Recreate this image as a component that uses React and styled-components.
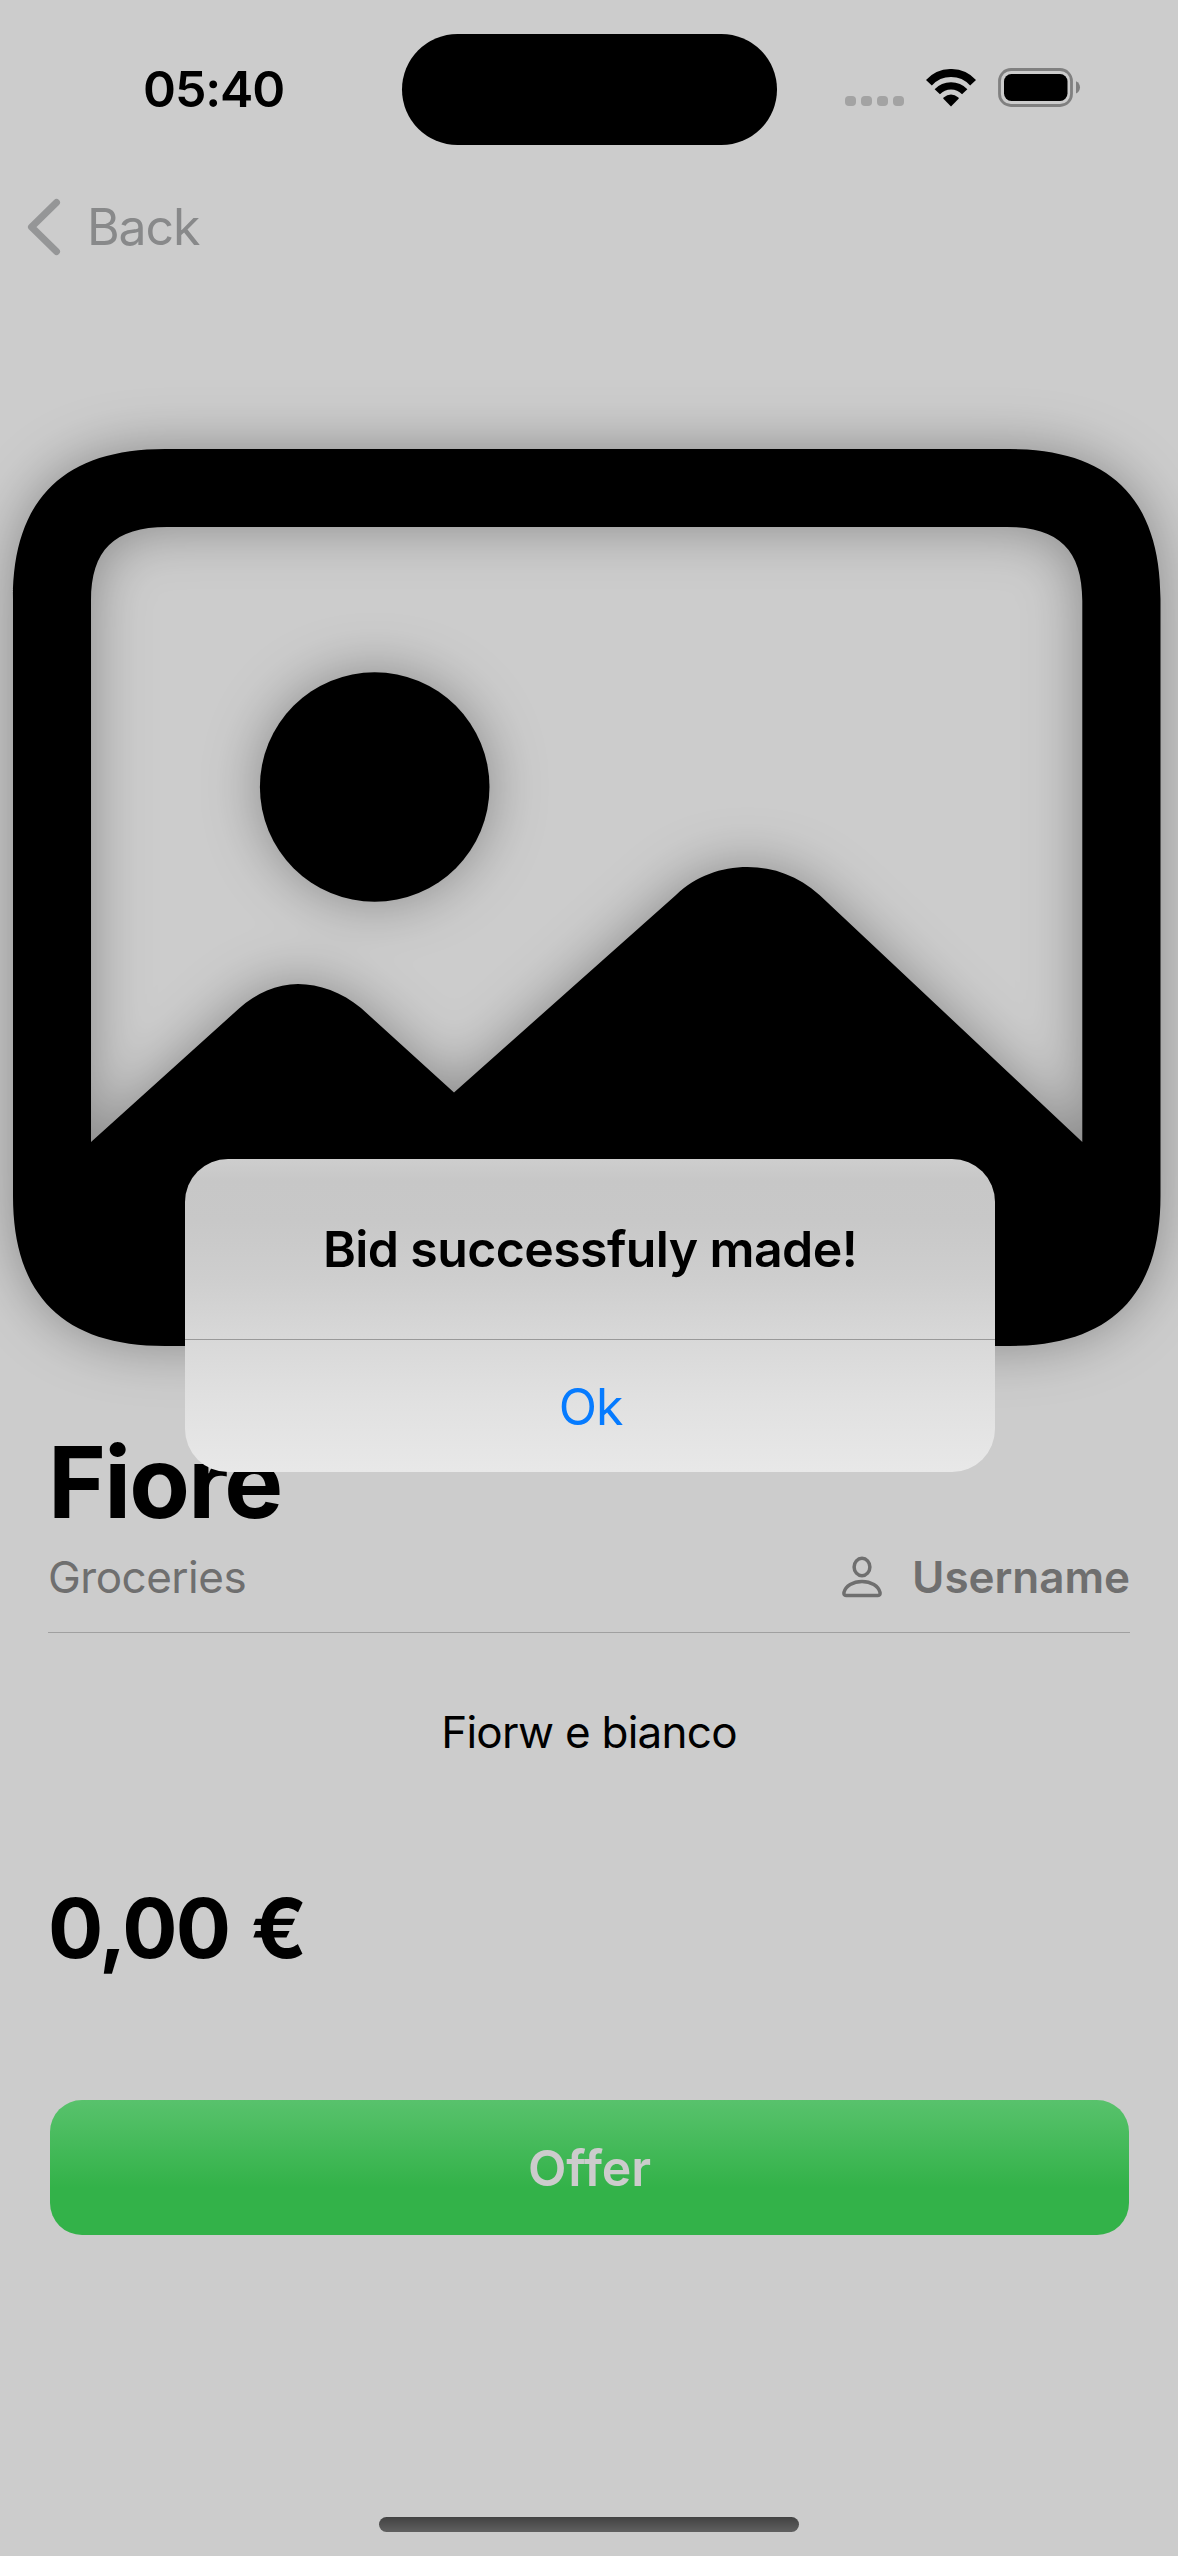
import React from "react";
import styled, { createGlobalStyle } from "styled-components";

const GlobalStyle = createGlobalStyle`
  html, body {
    margin: 0;
    background: #cccccc;
  }
  * { box-sizing: border-box; }
`;

const Screen = styled.main`
  position: relative;
  display: flex;
  flex-direction: column;
  width: 1178px;
  height: 2556px;
  overflow: hidden;
  background: #cccccc;
  color: #000;
  font-family: Inter, "Liberation Sans", sans-serif;
`;

const StatusBar = styled.header`
  display: grid;
  grid-template-columns: 402px 375px 401px;
  align-items: center;
  height: 178px;
  flex: none;
`;

const Clock = styled.time`
  padding-left: 143px;
  font-size: 50px;
  font-weight: 600;
  line-height: 60px;
  letter-spacing: ${(p) => p.$tracking}px;
  white-space: nowrap;
`;

const Island = styled.div`
  height: 111px;
  border-radius: 56px;
  background: #000;
`;

const Indicators = styled.div`
  display: flex;
  align-items: center;
  padding: 0 0 3px 68px;
`;

const Cellular = styled.div`
  display: flex;
  gap: 5.5px;
  margin: 27px 22px 0 0;
`;

const Dot = styled.i`
  width: 10.5px;
  height: 10px;
  border-radius: 4px;
  background: #a3a3a3;
`;

const WifiIcon = styled.svg`
  width: 50px;
  height: 38px;
  margin-right: 22.5px;
`;

const BatteryIcon = styled.svg`
  width: 83px;
  height: 39px;
`;

const NavBar = styled.nav`
  display: flex;
  align-items: center;
  height: 98px;
  flex: none;
  padding-left: 27px;
`;

const BackButton = styled.button`
  display: flex;
  align-items: center;
  gap: 26px;
  padding: 0;
  border: 0;
  background: none;
  color: #88898a;
  font: 400 50px/60px Inter, "Liberation Sans", sans-serif;
  letter-spacing: ${(p) => p.$tracking}px;
`;

const Chevron = styled.svg`
  width: 34px;
  height: 58px;
`;

const Picture = styled.svg`
  flex: none;
  width: 1148px;
  height: 897px;
  margin: 173px 0 0 12.8px;
  overflow: visible;
`;

const Details = styled.section`
  display: flex;
  flex-direction: column;
  padding: 86px 48px 0;
`;

const Title = styled.h1`
  margin: 0;
  font-size: 99px;
  font-weight: 700;
  line-height: 100px;
  letter-spacing: ${(p) => p.$tracking}px;
`;

const MetaRow = styled.div`
  display: flex;
  justify-content: space-between;
  align-items: center;
  height: 60px;
  margin-top: 15px;
  color: #6f6f6f;
  font-size: 44px;
  line-height: 60px;
`;

const Category = styled.span`
  letter-spacing: ${(p) => p.$tracking}px;
`;

const Seller = styled.div`
  display: flex;
  align-items: center;
  gap: 30px;
`;

const PersonIcon = styled.svg`
  width: 40px;
  height: 42px;
`;

const SellerName = styled.span`
  font-weight: 600;
  letter-spacing: ${(p) => p.$tracking}px;
`;

const Divider = styled.hr`
  width: 100%;
  height: 1px;
  margin: 25px 0 0;
  border: 0;
  background: #a0a0a0;
`;

const Description = styled.p`
  margin: 69px 0 0;
  font-size: 44px;
  line-height: 60px;
  letter-spacing: ${(p) => p.$tracking}px;
  text-align: center;
`;

const Price = styled.strong`
  margin-top: 117px;
  font-size: 82px;
  font-weight: 700;
  line-height: 100px;
  letter-spacing: ${(p) => p.$tracking}px;
  word-spacing: 4px;
`;

const OfferButton = styled.button`
  height: 135px;
  margin: 121px 1px 0 2px;
  padding: 0;
  border: 0;
  border-radius: 32px;
  background: linear-gradient(#58c26c 0%, #33b249 65%, #33b249 100%);
  color: #cccccc;
  font: 600 50px/60px Inter, "Liberation Sans", sans-serif;
  letter-spacing: ${(p) => p.$tracking}px;
`;

const HomeBar = styled.div`
  width: 420px;
  height: 15px;
  margin: auto auto 24px;
  border-radius: 8px;
  background: linear-gradient(#424242, #606060);
`;

const Alert = styled.div`
  position: absolute;
  top: 1159px;
  left: 185px;
  display: flex;
  flex-direction: column;
  width: 810px;
  height: 313px;
  border-radius: 43px;
  overflow: hidden;
  background: linear-gradient(#cecece 0%, #c7c7c7 7%, #c8c8c8 20%, #cecece 38%, #d8d8d8 57%, #e1e1e1 78%, #e8e8e8 100%);
`;

const AlertTitle = styled.h2`
  margin: 0;
  height: 181px;
  border-bottom: 1px solid #999;
  font-size: 50px;
  font-weight: 600;
  line-height: 180px;
  letter-spacing: ${(p) => p.$tracking}px;
  text-align: center;
`;

const AlertAction = styled.button`
  flex: 1;
  padding: 2px 0 0 1px;
  border: 0;
  background: none;
  color: #067bff;
  font: 400 50px/60px Inter, "Liberation Sans", sans-serif;
  letter-spacing: ${(p) => p.$tracking}px;
`;

function StatusIndicators() {
  return (
    <Indicators>
      <Cellular>
        <Dot />
        <Dot />
        <Dot />
        <Dot />
      </Cellular>
      <WifiIcon viewBox="0 0 50 38">
        <path d="M2.9 13.7A30 30 0 0 1 47.1 13.7" fill="none" stroke="#000" strokeWidth="8" />
        <path d="M11.3 22.7A19 19 0 0 1 38.7 22.7" fill="none" stroke="#000" strokeWidth="7.4" />
        <path d="M25 37.4L17.4 29.8Q17 29.2 17.6 28.6Q25 22.2 32.4 28.6Q33 29.2 32.6 29.8Z" />
      </WifiIcon>
      <BatteryIcon viewBox="0 0 83 39">
        <rect x="1.5" y="1.5" width="72" height="36" rx="11.5" fill="none" stroke="#808080" strokeWidth="2.8" />
        <rect x="6" y="6" width="63.5" height="27" rx="7.5" />
        <path d="M78 13.2C83.3 15 83.3 23.6 78 25.4Z" fill="#808080" />
      </BatteryIcon>
    </Indicators>
  );
}

function PlaceholderPicture() {
  return (
    <Picture viewBox="0 0 1148 897">
      <defs>
        <filter id="soft" filterUnits="userSpaceOnUse" x="-150" y="-150" width="1450" height="1200">
          <feDropShadow dx="0" dy="0" stdDeviation="28" floodColor="#000" floodOpacity="0.33" />
        </filter>
      </defs>
      <g filter="url(#soft)">
        <path
          fillRule="evenodd"
          d="M152 0H996C1097 0 1147.5 50 1147.5 150V747C1147.5 847 1097 897 996 897H152C51 897 0 847 0 747V150C0 50 51 0 152 0Z
             M78 693L226 559.5C243 544 264 535 285 535C306 535 329 543 348 559L441 643.5L663 446C683 427 708 418 734.5 418C761 418 785 427 806.5 446L1069.3 693V152C1069.3 101 1046 78 994 78H154C101 78 78 101 78 152Z"
        />
        <circle cx="361.7" cy="338" r="114.8" />
      </g>
    </Picture>
  );
}

export default function App() {
  return (
    <Screen>
      <GlobalStyle />
      <StatusBar>
        <Clock $tracking={-1.1}>05:40</Clock>
        <Island />
        <StatusIndicators />
      </StatusBar>
      <NavBar>
        <BackButton $tracking={-1.1}>
          <Chevron viewBox="0 0 34 58" fill="none" stroke="#959697" strokeWidth="7" strokeLinecap="round" strokeLinejoin="round">
            <path d="M29.5 4.5L4.5 29L29.5 53.5" />
          </Chevron>
          Back
        </BackButton>
      </NavBar>
      <PlaceholderPicture />
      <Details>
        <Title $tracking={-1.8}>Fiore</Title>
        <MetaRow>
          <Category $tracking={-0.5}>Groceries</Category>
          <Seller>
            <PersonIcon viewBox="0 0 40 42" fill="none" stroke="#6f6f6f" strokeWidth="3.5" strokeLinejoin="round">
              <ellipse cx="20" cy="11" rx="7.9" ry="8.7" />
              <path d="M4 39.6C2.3 39.6 1.7 38.2 2 36.4C3.5 30 11 25.4 20 25.4C29 25.4 36.5 30 38 36.4C38.3 38.2 37.7 39.6 36 39.6Z" />
            </PersonIcon>
            <SellerName $tracking={-0.05}>Username</SellerName>
          </Seller>
        </MetaRow>
        <Divider />
        <Description $tracking={-0.75}>Fiorw e bianco</Description>
        <Price $tracking={-1.8}>0,00 €</Price>
        <OfferButton $tracking={-0.1}>Offer</OfferButton>
      </Details>
      <HomeBar />
      <Alert role="alertdialog">
        <AlertTitle $tracking={-0.6}>Bid successfuly made!</AlertTitle>
        <AlertAction $tracking={-1}>Ok</AlertAction>
      </Alert>
    </Screen>
  );
}
